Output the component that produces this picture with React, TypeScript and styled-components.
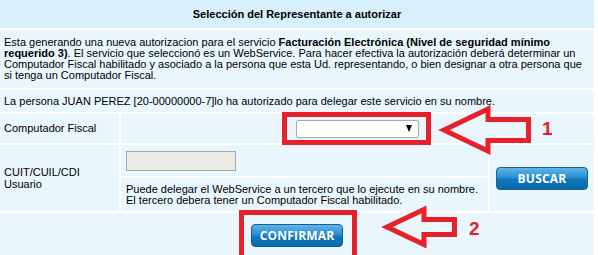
import styled, { createGlobalStyle } from "styled-components";

const GlobalStyle = createGlobalStyle`
  html, body {
    margin: 0;
    padding: 0;
    background: #fff;
    overflow: hidden;
  }
  body {
    font-family: "Liberation Sans", Arial, sans-serif;
    font-size: 11px;
    color: #000;
  }
`;

const Page = styled.div`
  position: relative;
  width: 598px;
  height: 255px;
  overflow: hidden;
`;

const Table = styled.table`
  width: 598px;
  margin: -2px 0 0 -2px;
  border-collapse: separate;
  border-spacing: 2px;
  table-layout: fixed;
`;

const HeaderCell = styled.th`
  height: 28px;
  padding: 0;
  background: #d8effc;
  font-weight: bold;
  font-size: 11px;
  text-align: center;
  vertical-align: middle;
`;

const Cell = styled.td<{ $h?: number; $center?: boolean; $pad?: number; $lh?: number }>`
  height: ${(p) => (p.$h ? `${p.$h}px` : "auto")};
  padding: 0 ${(p) => p.$pad ?? 4}px;
  background: #eaf6fd;
  line-height: ${(p) => p.$lh ?? 11}px;
  text-align: ${(p) => (p.$center ? "center" : "left")};
  vertical-align: middle;
  box-sizing: border-box;
`;

const SelectBox = styled.div`
  display: inline-flex;
  align-items: center;
  justify-content: flex-end;
  box-sizing: border-box;
  width: 123px;
  height: 18px;
  padding-right: 6px;
  background: #fff;
  border: 1px solid #a9a9a9;
  border-radius: 2px;
  vertical-align: middle;
`;

const Caret = styled.span`
  width: 0;
  height: 0;
  border-left: 3.5px solid transparent;
  border-right: 3.5px solid transparent;
  border-top: 7px solid #000;
`;

const TextInput = styled.input`
  display: block;
  box-sizing: border-box;
  width: 110px;
  height: 20px;
  padding: 0;
  background: #ebebe4;
  border: 1px solid #a9a9a9;
  margin: 1px 0 0 0;
`;

const BlueButton = styled.button`
  box-sizing: border-box;
  width: 92px;
  height: 23px;
  padding: 0;
  border: 1px solid #14609a;
  border-radius: 4px;
  background: linear-gradient(#5fb4e6 0%, #2a8fd0 45%, #1177bd 55%, #0b69aa 100%);
  color: #fff;
  font-family: "Open Sans", "Liberation Sans", sans-serif;
  font-weight: bold;
  font-size: 12px;
  letter-spacing: 0.2px;
  vertical-align: middle;
  cursor: pointer;
`;

const Marks = styled.svg`
  position: absolute;
  left: 0;
  top: 0;
  pointer-events: none;
`;

const red = "#e8202a";

export default function App() {
  return (
    <Page>
      <GlobalStyle />
      <Table>
        <colgroup>
          <col style={{ width: 119 }} />
          <col style={{ width: 367 }} />
          <col style={{ width: 104 }} />
        </colgroup>
        <tbody>
          <tr>
            <HeaderCell colSpan={3}>Selección del Representante a autorizar</HeaderCell>
          </tr>
          <tr>
            <Cell colSpan={3} $h={58}>
              Esta generando una nueva autorizacion para el servicio{" "}
              <b>Facturación Electrónica (Nivel de seguridad mínimo requerido 3)</b>. El servicio que
              seleccionó es un WebService. Para hacer efectiva la autorización deberá determinar un
              Computador Fiscal habilitado y asociado a la persona que esta Ud. representando, o bien
              designar a otra persona que si tenga un Computador Fiscal.
            </Cell>
          </tr>
          <tr>
            <Cell colSpan={3} $h={22}>
              La persona JUAN PEREZ [20-00000000-7]lo ha autorizado para delegar este servicio en su
              nombre.
            </Cell>
          </tr>
          <tr>
            <Cell $h={29}>Computador Fiscal</Cell>
            <Cell colSpan={2} $center>
              <SelectBox>
                <Caret />
              </SelectBox>
            </Cell>
          </tr>
          <tr>
            <Cell rowSpan={2} $lh={12}>
              CUIT/CUIL/CDI
              <br />
              Usuario
            </Cell>
            <Cell $h={31} $pad={5}>
              <TextInput type="text" disabled />
            </Cell>
            <Cell rowSpan={2} $center>
              <BlueButton>BUSCAR</BlueButton>
            </Cell>
          </tr>
          <tr>
            <Cell $h={33} $pad={5}>
              Puede delegar el WebService a un tercero que lo ejecute en su nombre.
              <br />
              El tercero debera tener un Computador Fiscal habilitado.
            </Cell>
          </tr>
          <tr>
            <Cell colSpan={3} $h={44} $center>
              <BlueButton>CONFIRMAR</BlueButton>
            </Cell>
          </tr>
        </tbody>
      </Table>

      <Marks width={598} height={255} viewBox="0 0 598 255">
        <rect x={284.5} y={114.5} width={144} height={28} fill="none" stroke={red} strokeWidth={5} />
        <polygon
          points="444,130 488,109 488,119.5 528.5,119.5 528.5,140.5 488,140.5 488,151"
          fill="none"
          stroke={red}
          strokeWidth={5}
          strokeLinejoin="miter"
        />
        <text x={542} y={135} fill={red} fontFamily="Liberation Sans, Arial, sans-serif" fontWeight="bold" fontSize={19}>
          1
        </text>
        <rect x={241.5} y={212.5} width={113} height={50} fill="none" stroke={red} strokeWidth={5} />
        <polygon
          points="387,227 424,209.5 424,219.5 454.5,219.5 454.5,234.5 424,234.5 424,244.5"
          fill="none"
          stroke={red}
          strokeWidth={5}
          strokeLinejoin="miter"
        />
        <text x={469} y={235} fill={red} fontFamily="Liberation Sans, Arial, sans-serif" fontWeight="bold" fontSize={19}>
          2
        </text>
      </Marks>
    </Page>
  );
}
